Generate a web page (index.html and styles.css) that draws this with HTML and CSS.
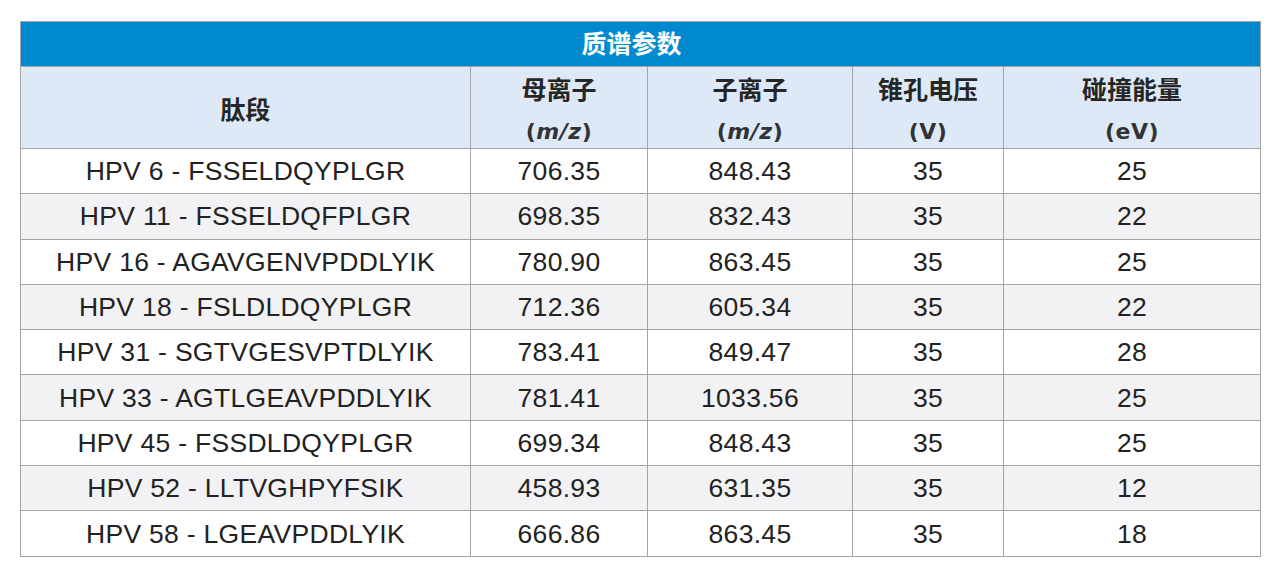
FILE: index.html
```html
<!DOCTYPE html>
<html lang="zh">
<head>
<meta charset="utf-8">
<link rel="stylesheet" href="styles.css">
</head>
<body>
<table class="ms-table">
  <colgroup>
    <col class="c1"><col class="c2"><col class="c3"><col class="c4"><col class="c5">
  </colgroup>
  <thead>
    <tr class="title-row"><th colspan="5"><span class="title">质谱参数</span></th></tr>
    <tr class="head-row">
      <th>肽段</th>
      <th>母离子<br><span class="unit">(<i>m/z</i>)</span></th>
      <th>子离子<br><span class="unit">(<i>m/z</i>)</span></th>
      <th>锥孔电压<br><span class="unit">(V)</span></th>
      <th>碰撞能量<br><span class="unit">(eV)</span></th>
    </tr>
  </thead>
  <tbody>
    <tr><td>HPV 6 - FSSELDQYPLGR</td><td>706.35</td><td>848.43</td><td>35</td><td>25</td></tr>
    <tr><td>HPV 11 - FSSELDQFPLGR</td><td>698.35</td><td>832.43</td><td>35</td><td>22</td></tr>
    <tr><td>HPV 16 - AGAVGENVPDDLYIK</td><td>780.90</td><td>863.45</td><td>35</td><td>25</td></tr>
    <tr><td>HPV 18 - FSLDLDQYPLGR</td><td>712.36</td><td>605.34</td><td>35</td><td>22</td></tr>
    <tr><td>HPV 31 - SGTVGESVPTDLYIK</td><td>783.41</td><td>849.47</td><td>35</td><td>28</td></tr>
    <tr><td>HPV 33 - AGTLGEAVPDDLYIK</td><td>781.41</td><td>1033.56</td><td>35</td><td>25</td></tr>
    <tr><td>HPV 45 - FSSDLDQYPLGR</td><td>699.34</td><td>848.43</td><td>35</td><td>25</td></tr>
    <tr><td>HPV 52 - LLTVGHPYFSIK</td><td>458.93</td><td>631.35</td><td>35</td><td>12</td></tr>
    <tr><td>HPV 58 - LGEAVPDDLYIK</td><td>666.86</td><td>863.45</td><td>35</td><td>18</td></tr>
  </tbody>
</table>
</body>
</html>
```
FILE: styles.css
```css
html, body {
  margin: 0;
  padding: 0;
  background: #ffffff;
}
body {
  padding: 21px 0 0 20px;
}
.ms-table {
  border-collapse: collapse;
  table-layout: fixed;
  width: 1240px;
  font-family: "Liberation Sans", Arial, "Noto Sans CJK SC", sans-serif;
  color: #222222;
}
.c1 { width: 450px; }
.c2 { width: 177px; }
.c3 { width: 205px; }
.c4 { width: 151px; }
.c5 { width: 257px; }

.ms-table th,
.ms-table td {
  border: 1px solid #a4a4a6;
  text-align: center;
  padding: 0;
}
.title-row th {
  background: #0189d0;
  height: 44px;
  color: #ffffff;
  font-family: "Noto Sans CJK SC", sans-serif;
  font-weight: 700;
  font-size: 25px;
  line-height: 30px;
}
.title {
  display: inline-block;
  padding-right: 18px;
  transform: translateY(-2px);
}
.head-row th {
  background: #dde9f6;
  height: 81px;
  font-family: "Noto Sans CJK SC", sans-serif;
  font-weight: 700;
  font-size: 25px;
  line-height: 40px;
  color: #262626;
}
.unit {
  font-family: "DejaVu Sans", "Noto Sans CJK SC", sans-serif;
  font-weight: 700;
  font-size: 22px;
  line-height: 0;
  letter-spacing: 0.5px;
  color: #333333;
}
.unit i {
  font-style: italic;
  font-weight: 600;
}
tbody tr {
  height: 45.3px;
}
tbody td {
  font-size: 26.5px;
  letter-spacing: 0.3px;
  line-height: 30px;
  color: #222222;
}
tbody tr:nth-child(odd) td {
  background: #ffffff;
}
tbody tr:nth-child(even) td {
  background: #f2f2f4;
}
```
